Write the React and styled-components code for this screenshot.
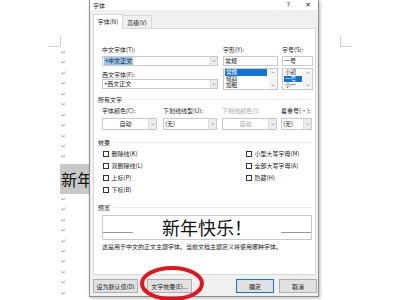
import React from "react";
import styled, { createGlobalStyle } from "styled-components";

const FONT = '"Noto Sans CJK SC", "Noto Sans", sans-serif';

const Global = createGlobalStyle`
  html, body { margin: 0; padding: 0; background: #fff; }
  body { font-family: ${FONT}; width: 400px; height: 300px; overflow: hidden; }
  * { box-sizing: border-box; }
`;

const Page = styled.div`
  position: relative;
  width: 400px;
  height: 300px;
  overflow: hidden;
  background: #fff;
`;

/* ---------- Word document behind ---------- */
const Doc = styled.div`
  padding: 36px 0 0 48px;
`;
const CropRow = styled.div`
  display: flex;
  justify-content: space-between;
  width: 304px;
  height: 11px;
`;
const Crop = styled.div`
  width: ${(p) => (p.$side === "left" ? 13 : 12)}px;
  height: 11px;
  border-bottom: 1px solid #cfcfcf;
  ${(p) =>
    p.$side === "left"
      ? "border-right: 1px solid #cfcfcf;"
      : "border-left: 1px solid #cfcfcf;"}
`;
const Lines = styled.div`
  padding-left: 13px;
  display: flex;
  flex-direction: column;
`;
const Mark = styled.div`
  height: 10.45px;
  line-height: 10.45px;
  font-family: "DejaVu Sans", sans-serif;
  font-size: 6px;
  color: #9c9c9c;
`;
const BigLine = styled.div`
  height: 32px;
  display: flex;
  align-items: flex-end;
  margin-left: -1px;
`;
const Highlight = styled.span`
  display: inline-block;
  height: 30px;
  line-height: 30px;
  padding-left: 1px;
  background: #c8c8c8;
  font-size: 16px;
  color: #111;
  white-space: nowrap;
`;

/* ---------- Dialog ---------- */
const Dialog = styled.div`
  position: absolute;
  left: 89px;
  top: 0;
  width: 230px;
  height: 297px;
  background: #f0f0f0;
  border: 1px solid #8e8e8e;
  border-top: none;
  box-shadow: 1px 1px 3px rgba(0, 0, 0, 0.3);
  display: flex;
  flex-direction: column;
  font-size: 6px;
  color: #1a1a1a;
`;
const TitleBar = styled.div`
  height: 10px;
  background: #fff;
  display: flex;
  align-items: center;
  padding: 0 7px 0 3px;
  font-size: 6px;
`;
const TitleTools = styled.div`
  margin-left: auto;
  display: flex;
  gap: 15px;
  font-size: 7px;
  color: #333;
  font-family: "DejaVu Sans", sans-serif;
`;
const TabsRow = styled.div`
  height: 18px;
  display: flex;
  align-items: flex-end;
  padding-left: 3px;
  position: relative;
  z-index: 1;
`;
const Tab = styled.div`
  width: ${(p) => p.$w}px;
  height: ${(p) => (p.$active ? 15 : 13)}px;
  margin-bottom: ${(p) => (p.$active ? -1 : 0)}px;
  background: ${(p) => (p.$active ? "#fff" : "#f0f0f0")};
  border: 1px solid #d9d9d9;
  border-bottom: none;
  ${(p) => (!p.$active ? "border-left: none;" : "")}
  display: flex;
  align-items: center;
  justify-content: center;
  padding-bottom: ${(p) => (p.$active ? 2 : 0)}px;
`;
const Panel = styled.div`
  height: 247px;
  margin: 0 2px 0 3px;
  background: #fff;
  border: 1px solid #d9d9d9;
  padding: 0 3px 0 4px;
  display: flex;
  flex-direction: column;
`;

const TopGrid = styled.div`
  margin-top: 16px;
  padding-left: 4px;
  display: grid;
  grid-template-columns: 116px 55px 30px;
  column-gap: 5px;
  & > :nth-child(3) {
    margin-left: -1px;
  }
`;
const Col = styled.div`
  display: flex;
  flex-direction: column;
`;
const Label = styled.div`
  height: 9px;
  line-height: 9px;
  white-space: nowrap;
  color: ${(p) => (p.$disabled ? "#a6a6a6" : "#1a1a1a")};
  margin-top: ${(p) => p.$mt || 0}px;
`;
const Field = styled.div`
  height: ${(p) => p.$h || 10}px;
  margin-top: ${(p) => p.$mt || 0}px;
  border: 1px solid #c9c9c9;
  background: #fff;
  display: flex;
  align-items: stretch;
  line-height: ${(p) => (p.$h || 10) - 2}px;
`;
const FieldText = styled.div`
  flex: 1;
  padding: 0 1px;
  white-space: nowrap;
  overflow: hidden;
  text-align: ${(p) => (p.$center ? "center" : "left")};
  color: ${(p) => (p.$disabled ? "#a6a6a6" : "#1a1a1a")};
`;
const Sel = styled.span`
  background: #96c6f0;
  padding: 0 1px;
`;
const ArrowBox = styled.div`
  width: ${(p) => p.$w || 7}px;
  background: #ececec;
  border-left: 1px solid #dadada;
  display: flex;
  align-items: center;
  justify-content: center;
`;
const ListBox = styled.div`
  height: 22px;
  margin-top: 2px;
  border: 1px solid #c9c9c9;
  display: flex;
`;
const Items = styled.div`
  flex: 1;
  padding: 0 1px;
  overflow: hidden;
  display: flex;
  flex-direction: column;
`;
const Item = styled.div`
  flex: none;
  height: 6.7px;
  line-height: 6.7px;
  font-size: 5.6px;
  white-space: nowrap;
  padding-left: 1px;
  background: ${(p) => (p.$sel ? "#0f74d6" : "transparent")};
  color: ${(p) => (p.$sel ? "#fff" : "#1a1a1a")};
`;
const ScrollBar = styled.div`
  width: 9px;
  background: #f4f4f4;
  display: flex;
  flex-direction: column;
  justify-content: space-between;
  align-items: center;
  padding: 2px 0;
`;

const SectionHead = styled.div`
  margin-top: ${(p) => p.$mt}px;
  height: 9px;
  line-height: 9px;
  display: flex;
  align-items: center;
  gap: 3px;
  &::after {
    content: "";
    flex: 1;
    height: 1px;
    background: #ececec;
  }
`;
const ColorGrid = styled.div`
  margin-top: 2px;
  padding-left: 4px;
  display: grid;
  grid-template-columns: 55px 55px 55px 30px;
  column-gap: 5px;
  & > :nth-child(2) {
    margin-left: 1px;
  }
  & > :nth-child(4) {
    margin-left: -1px;
  }
`;
const CheckGrid = styled.div`
  margin-top: 1px;
  padding-left: 5px;
  display: grid;
  grid-template-columns: 143px 1fr;
  grid-template-rows: repeat(4, 12px);
  grid-auto-flow: column;
`;
const CheckRow = styled.label`
  display: flex;
  align-items: center;
  gap: 2.5px;
  height: 12px;
  line-height: 8px;
  white-space: nowrap;
`;
const Box = styled.span`
  width: 6px;
  height: 6px;
  border: 1px solid #333;
  background: #fff;
`;
const Preview = styled.div`
  margin: 3px 0 0 4px;
  width: 210px;
  height: 25px;
  border: 1px solid #c8c8c8;
  display: flex;
  align-items: center;
`;
const BaseLine = styled.div`
  width: 30px;
  height: 1px;
  background: #9a9a9a;
  align-self: flex-end;
  margin-bottom: 6px;
`;
const PreviewText = styled.div`
  flex: 1;
  text-align: center;
  font-size: 18px;
  line-height: 23px;
  color: #111;
  white-space: nowrap;
`;
const Desc = styled.div`
  margin-top: 2px;
  padding-left: 4px;
  height: 9px;
  line-height: 9px;
  white-space: nowrap;
`;
const Footer = styled.div`
  margin-top: 4px;
  display: flex;
  padding: 0 1px 0 3px;
`;
const Group = styled.div`
  display: flex;
  gap: ${(p) => p.$gap}px;
  ${(p) => (p.$right ? "margin-left: auto;" : "")}
`;
const Button = styled.div`
  width: ${(p) => p.$w}px;
  height: 14px;
  background: #e1e1e1;
  border: 1px solid ${(p) => (p.$primary ? "#0a78d4" : "#adadad")};
  display: flex;
  align-items: center;
  justify-content: center;
  white-space: nowrap;
`;
const Ring = styled.svg`
  position: absolute;
  left: 139px;
  top: 265px;
`;

const Chevron = ({ up }) => (
  <svg width="4" height="3" viewBox="0 0 4 3">
    <path
      d={up ? "M0.5 2.5 L2 1 L3.5 2.5" : "M0.5 0.5 L2 2 L3.5 0.5"}
      fill="none"
      stroke="#8a8a8a"
      strokeWidth="0.7"
    />
  </svg>
);

const Select = ({ text, center, disabled, h = 12, mt = 3, arrowW = 8 }) => (
  <Field $h={h} $mt={mt}>
    <FieldText $center={center} $disabled={disabled}>
      {text}
    </FieldText>
    <ArrowBox $w={arrowW}>
      <Chevron />
    </ArrowBox>
  </Field>
);

const List = ({ items, sel }) => (
  <ListBox>
    <Items>
      {items.map((t, i) => (
        <Item key={t} $sel={i === sel}>
          {t}
        </Item>
      ))}
    </Items>
    <ScrollBar>
      <Chevron up />
      <Chevron />
    </ScrollBar>
  </ListBox>
);

const Check = ({ children }) => (
  <CheckRow>
    <Box />
    {children}
  </CheckRow>
);

export default function App() {
  const before = Array.from({ length: 11 });
  const after = Array.from({ length: 10 });
  return (
    <Page>
      <Global />
      <Doc>
        <CropRow>
          <Crop $side="left" />
          <Crop $side="right" />
        </CropRow>
        <Lines>
          {before.map((_, i) => (
            <Mark key={"b" + i}>↵</Mark>
          ))}
          <BigLine>
            <Highlight>新年</Highlight>
          </BigLine>
          {after.map((_, i) => (
            <Mark key={"a" + i}>↵</Mark>
          ))}
        </Lines>
      </Doc>

      <Dialog>
        <TitleBar>
          字体
          <TitleTools>
            <span>?</span>
            <span>✕</span>
          </TitleTools>
        </TitleBar>
        <TabsRow>
          <Tab $active $w={30}>字体(N)</Tab>
          <Tab $w={29}>高级(V)</Tab>
        </TabsRow>
        <Panel>
          <TopGrid>
            <Col>
              <Label>中文字体(T):</Label>
              <Field $mt={2}>
                <FieldText>
                  <Sel>+中文正文</Sel>
                </FieldText>
                <ArrowBox $w={7}>
                  <Chevron />
                </ArrowBox>
              </Field>
              <Label $mt={4}>西文字体(F):</Label>
              <Field>
                <FieldText>+西文正文</FieldText>
                <ArrowBox $w={7}>
                  <Chevron />
                </ArrowBox>
              </Field>
            </Col>
            <Col>
              <Label>字形(Y):</Label>
              <Field $mt={2}>
                <FieldText>常规</FieldText>
              </Field>
              <List items={["常规", "倾斜", "加粗"]} sel={0} />
            </Col>
            <Col>
              <Label>字号(S):</Label>
              <Field $mt={2}>
                <FieldText>一号</FieldText>
              </Field>
              <List items={["小初", "一号", "小一"]} sel={1} />
            </Col>
          </TopGrid>

          <SectionHead $mt={5}>所有文字</SectionHead>
          <ColorGrid>
            <Col>
              <Label>字体颜色(C):</Label>
              <Select text="自动" center />
            </Col>
            <Col>
              <Label>下划线线型(U):</Label>
              <Select text="(无)" />
            </Col>
            <Col>
              <Label $disabled>下划线颜色(I):</Label>
              <Select text="自动" center disabled />
            </Col>
            <Col>
              <Label>着重号(·):</Label>
              <Select text="(无)" />
            </Col>
          </ColorGrid>

          <SectionHead $mt={8}>效果</SectionHead>
          <CheckGrid>
            <Check>删除线(K)</Check>
            <Check>双删除线(L)</Check>
            <Check>上标(P)</Check>
            <Check>下标(B)</Check>
            <Check>小型大写字母(M)</Check>
            <Check>全部大写字母(A)</Check>
            <Check>隐藏(H)</Check>
          </CheckGrid>

          <SectionHead $mt={7}>预览</SectionHead>
          <Preview>
            <BaseLine />
            <PreviewText>新年快乐！</PreviewText>
            <BaseLine />
          </Preview>
          <Desc>这是用于中文的正文主题字体。当前文档主题定义将使用哪种字体。</Desc>
        </Panel>
        <Footer>
          <Group $gap={9}>
            <Button $w={45}>设为默认值(D)</Button>
            <Button $w={45}>文字效果(E)...</Button>
          </Group>
          <Group $gap={5} $right>
            <Button $w={38} $primary>
              确定
            </Button>
            <Button $w={38}>取消</Button>
          </Group>
        </Footer>
      </Dialog>

      <Ring width="66" height="36" viewBox="0 0 66 36">
        <ellipse
          cx="33"
          cy="18.5"
          rx="30"
          ry="15.5"
          fill="none"
          stroke="#e3141c"
          strokeWidth="4"
        />
      </Ring>
    </Page>
  );
}
